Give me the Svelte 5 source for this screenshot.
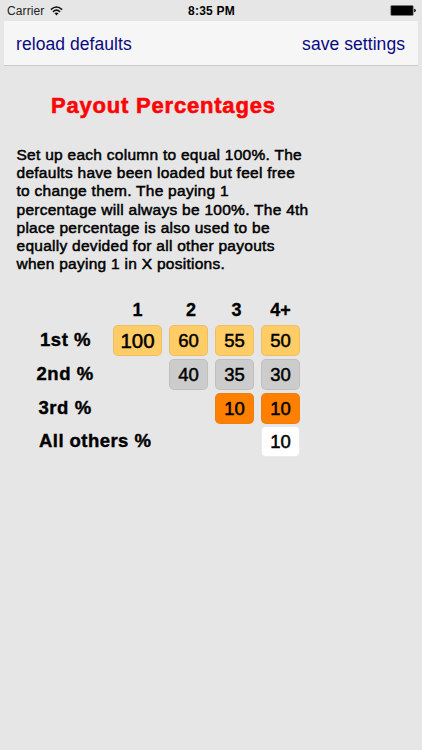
<script>
  const lines = [
    'Set up each column to equal 100%. The',
    'defaults have been loaded but feel free',
    'to change them. The paying 1',
    'percentage will always be 100%. The 4th',
    'place percentage is also used to be',
    'equally devided for all other payouts',
    'when paying 1 in X positions.'
  ];
  const headers = ['1', '2', '3', '4+'];
  const rows = [
    { label: '1st %', tone: 'gold', cells: ['100', '60', '55', '50'] },
    { label: '2nd %', tone: 'silver', cells: ['', '40', '35', '30'] },
    { label: '3rd %', tone: 'bronze', cells: ['', '', '10', '10'] },
    { label: 'All others %', tone: 'white', cells: ['', '', '', '10'] }
  ];
</script>

<div class="screen">
  <header class="status">
    <div class="carrier">
      <span>Carrier</span>
      <svg width="13" height="10" viewBox="0 0 13 10" fill="none" stroke="#111" stroke-width="1.6">
        <path d="M0.9 3.6 Q6.5 -1.6 12.1 3.6" />
        <path d="M3 5.8 Q6.5 2.6 10 5.8" />
        <path d="M4.5 7.3 Q6.5 5.6 8.5 7.3 L6.5 9.4Z" fill="#111" stroke="none" />
      </svg>
    </div>
    <div class="time">8:35 PM</div>
    <svg class="battery" width="26" height="11" viewBox="0 0 26 11">
      <rect x="0.8" y="0.5" width="22.4" height="10" rx="1" fill="#000" stroke="#777" stroke-width="0.7" />
      <path d="M24.2 3.7 Q25.8 4 25.8 5.5 Q25.8 7 24.2 7.3Z" fill="#000" />
    </svg>
  </header>

  <nav>
    <button class="reload">reload defaults</button>
    <button class="save">save settings</button>
  </nav>

  <main>
    <h1>Payout Percentages</h1>
    <p>
      {#each lines as line}
        <span>{line}</span>
      {/each}
    </p>
    <div class="heads">
      {#each headers as h, i}
        <div class="head c{i}">{h}</div>
      {/each}
    </div>
    {#each rows as row, r}
      <div class="row">
        <div class="label r{r}">{row.label}</div>
        {#each row.cells as value, i}
          <div class="cell c{i} {value ? row.tone : 'empty'}">{value}</div>
        {/each}
      </div>
    {/each}
  </main>
</div>

<style>
  :global(body) {
    background: #e6e6e6;
  }
  .screen {
    width: 422px;
    height: 750px;
    overflow: hidden;
    background: #e6e6e6;
    color: #000;
    font-family: 'Liberation Sans', Arial, sans-serif;
  }
  .status {
    display: grid;
    grid-template-columns: 1fr auto 1fr;
    align-items: center;
    height: 21px;
    padding: 0 6px 0 7px;
    box-sizing: border-box;
    font-size: 12px;
  }
  .carrier {
    display: flex;
    align-items: center;
    gap: 6px;
    letter-spacing: 0.1px;
    color: #222;
  }
  .time {
    font-weight: bold;
    font-size: 12px;
    letter-spacing: 0.2px;
    padding-top: 1px;
  }
  .battery {
    justify-self: end;
  }
  nav {
    display: flex;
    justify-content: space-between;
    align-items: center;
    height: 42px;
    margin: 0 4px;
    padding: 2px 13px 0 12px;
    background: #f6f6f6;
    border-bottom: 1px solid #c8c8c8;
  }
  button {
    border: 0;
    padding: 0;
    background: none;
    color: #0a0a80;
    font: 17.5px 'Liberation Sans', Arial, sans-serif;
    letter-spacing: 0.06px;
  }
  main {
    padding-left: 16px;
  }
  h1 {
    margin: 25px 0 0 35px;
    font-size: 22px;
    line-height: 30px;
    color: #fb0606;
    -webkit-text-stroke: 0.6px #fb0606;
    letter-spacing: 0.8px;
  }
  p {
    margin: 25px 0 0;
    padding-left: 0.5px;
    font-size: 15.5px;
    line-height: 18.2px;
    -webkit-text-stroke: 0.5px #000;
    letter-spacing: 0.27px;
    white-space: nowrap;
  }
  p span {
    display: block;
  }
  .heads,
  .row {
    display: flex;
    gap: 7px;
  }
  .heads {
    height: 30px;
    margin-top: 22px;
    padding-left: 97px;
    line-height: 31px;
  }
  .head {
    font-weight: bold;
    font-size: 18px;
    text-align: center;
    -webkit-text-stroke: 0.3px #000;
  }
  .head.c1 {
    text-indent: 5px;
  }
  .head.c2 {
    text-indent: 4px;
  }
  .row {
    height: 31px;
    margin-bottom: 2.6px;
  }
  .label {
    width: 90px;
    box-sizing: border-box;
    font-size: 18.5px;
    font-weight: bold;
    line-height: 29px;
    white-space: nowrap;
    letter-spacing: 0.55px;
    -webkit-text-stroke: 0.4px #000;
  }
  .r0 {
    padding-left: 24px;
  }
  .r1 {
    padding-left: 20.5px;
  }
  .r2 {
    padding-left: 22.5px;
  }
  .r3 {
    padding-left: 23px;
    letter-spacing: 0.45px;
  }
  .cell {
    box-sizing: border-box;
    border: 1px solid rgba(120, 120, 120, 0.15);
    border-radius: 5px;
    font-size: 18.5px;
    line-height: 30px;
    text-align: center;
    -webkit-text-stroke: 0.5px #000;
  }
  .cell.c0 {
    font-size: 20.5px;
  }
  .c0 {
    width: 49px;
  }
  .c1,
  .c2,
  .c3 {
    width: 39px;
  }
  .gold {
    background: #ffcc66;
  }
  .silver {
    background: #cccccc;
  }
  .bronze {
    background: #ff8000;
  }
  .white {
    background: #fff;
  }
  .empty {
    visibility: hidden;
  }
</style>
